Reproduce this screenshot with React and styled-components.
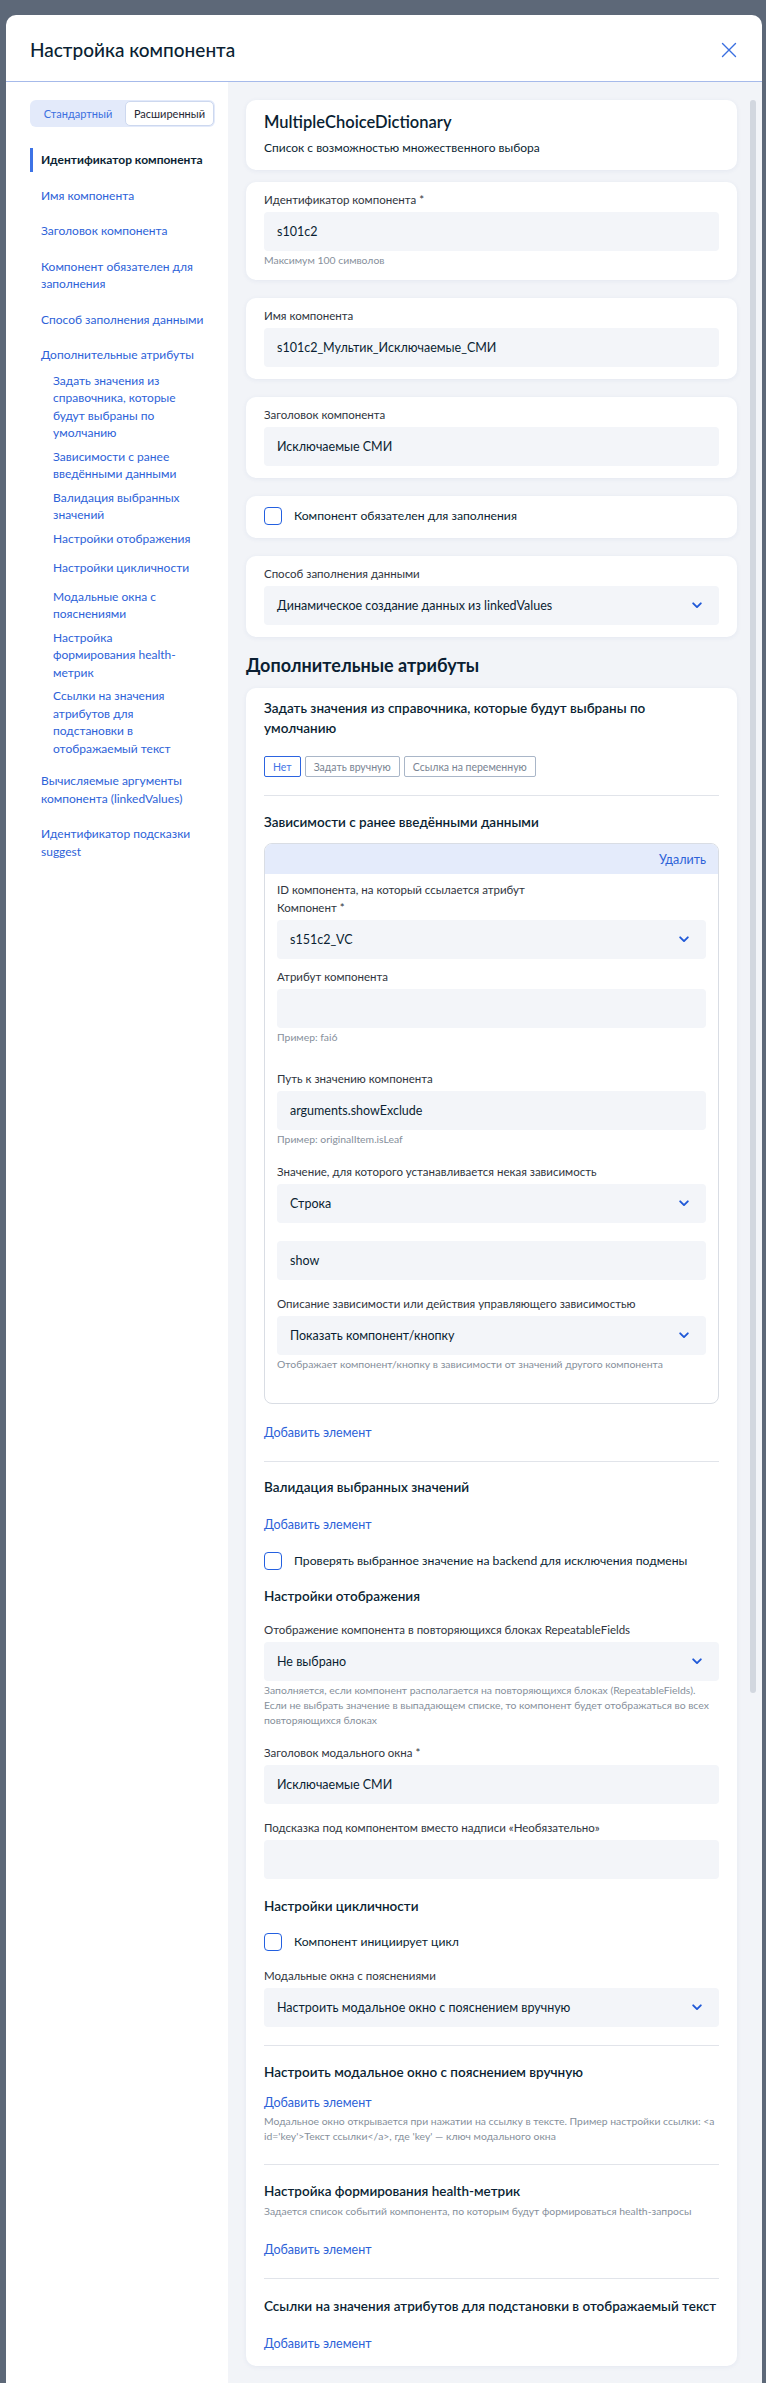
import React from 'react';
import styled, { createGlobalStyle } from 'styled-components';

const GlobalStyle = createGlobalStyle`
  html, body { margin: 0; padding: 0; }
  body {
    background: #5d6878;
    font-family: Lato, Roboto, "Liberation Sans", sans-serif;
    color: #0b1f33;
    overflow: hidden;
  }
  * { box-sizing: border-box; }
`;

const Page = styled.div`
  height: 2383px;
  padding: 15px 4px 0 6px;
`;

const Modal = styled.div`
  height: 2368px;
  background: #fff;
  border-radius: 10px 10px 0 0;
  display: flex;
  flex-direction: column;
  overflow: hidden;
`;

const Header = styled.header`
  height: 67px;
  flex-shrink: 0;
  display: flex;
  align-items: center;
  justify-content: space-between;
  padding: 3px 25px 0 24px;
  border-bottom: 1px solid #a6baea;
`;

const Title = styled.h1`
  margin: 0;
  font-size: 19px;
  line-height: 26px;
  font-weight: 500;
  color: #0b1f33;
`;

const CloseBtn = styled.button`
  border: 0;
  background: none;
  padding: 0;
  width: 16px;
  height: 16px;
  display: flex;
  cursor: pointer;
`;

const Body = styled.div`
  flex: 1;
  display: flex;
  min-height: 0;
`;

const Sidebar = styled.aside`
  width: 222px;
  flex-shrink: 0;
  background: #fff;
  padding: 18px 0 0 24px;
`;

const Tabs = styled.div`
  display: flex;
  width: 185px;
  height: 27px;
  padding: 1px;
  background: #e3eafa;
  border-radius: 6px;
`;

const Tab = styled.div`
  flex: 0 0 ${p => p.$w}px;
  display: flex;
  align-items: center;
  justify-content: center;
  font-size: 11px;
  border-radius: 5px;
  color: ${p => (p.$active ? '#1f2733' : '#3a6fe0')};
  background: ${p => (p.$active ? '#fff' : 'transparent')};
  border: 1px solid ${p => (p.$active ? '#cdd8ef' : 'transparent')};
`;

const Nav = styled.nav`
  margin-top: 21px;
  display: flex;
  flex-direction: column;
  gap: 12px;
  width: 181px;
`;

const NavItem = styled.a`
  display: block;
  padding: 3px 0 3px 8px;
  border-left: 3px solid ${p => (p.$active ? '#3d73e6' : 'transparent')};
  font-size: 12px;
  line-height: 17.5px;
  font-weight: ${p => (p.$active ? 700 : 400)};
  color: ${p => (p.$active ? '#0b1f33' : '#2d62d8')};
  text-decoration: none;
`;

const SubNav = styled.div`
  display: flex;
  flex-direction: column;
  padding-left: 23px;
  margin: -10px 0 -3px;
  width: 162px;
`;

const SubItem = styled.a`
  display: block;
  min-height: 29px;
  padding: 3px 0;
  font-size: 12px;
  line-height: 17.5px;
  color: #2d62d8;
  text-decoration: none;
`;

const Main = styled.main`
  flex: 1;
  display: flex;
  background: #f2f4f8;
  padding: 18px 6px 0 18px;
`;

const Content = styled.div`
  width: 491px;
  display: flex;
  flex-direction: column;
`;

const ScrollTrack = styled.div`
  width: 6px;
  margin-left: 13px;
`;

const ScrollThumb = styled.div`
  height: 1593px;
  border-radius: 3px;
  background: #d2d7df;
`;

const Card = styled.section`
  background: #fff;
  border-radius: 10px;
  padding: 10px 18px 12px;
  margin-top: ${p => p.$mt || 0}px;
  box-shadow: 0 1px 5px rgba(40, 70, 140, 0.07);
`;

const IntroTitle = styled.h2`
  margin: 0;
  font-size: 16.5px;
  line-height: 24px;
  font-weight: 600;
`;

const IntroText = styled.p`
  margin: 4px 0 0;
  font-size: 12px;
  line-height: 20px;
`;

const Label = styled.div`
  font-size: 11.5px;
  line-height: 16px;
  color: #2f3540;
  margin-bottom: ${p => (p.$mb !== undefined ? p.$mb : 4)}px;
`;

const Input = styled.div`
  height: 39px;
  border-radius: 4px;
  background: #f3f5f9;
  padding: 0 17px 0 13px;
  display: flex;
  align-items: center;
  justify-content: space-between;
  font-size: 12.5px;
  color: #0b1f33;
  margin-top: ${p => p.$mt || 0}px;
`;

const Hint = styled.div`
  margin-top: ${p => (p.$mt !== undefined ? p.$mt : 2)}px;
  font-size: 10.4px;
  line-height: 15px;
  color: #868f9b;
`;

const FieldWrap = styled.div`
  margin-top: ${p => p.$mt || 0}px;
`;

const CheckRow = styled.label`
  display: flex;
  align-items: center;
  gap: 12px;
  min-height: 20px;
  margin-top: ${p => p.$mt || 0}px;
`;

const Box = styled.span`
  width: 18px;
  height: 18px;
  flex-shrink: 0;
  border: 1.5px solid #2360e0;
  border-radius: 4px;
`;

const CheckText = styled.span`
  font-size: 12.2px;
  line-height: 20px;
  color: #0b1f33;
`;

const GroupTitle = styled.h2`
  margin: 16px 0 0;
  font-size: 18px;
  line-height: 24px;
  font-weight: 700;
`;

const H3 = styled.h3`
  margin: ${p => p.$mt || 0}px 0 0;
  font-size: 13.5px;
  line-height: 20px;
  font-weight: 600;
`;

const Toggles = styled.div`
  display: flex;
  gap: 4px;
  margin-top: 18px;
`;

const Toggle = styled.button`
  height: 21px;
  padding: 0 8px;
  background: #fff;
  border: 1px solid ${p => (p.$active ? '#2c64e0' : '#a9b6c8')};
  border-radius: 2px;
  font-family: inherit;
  font-size: 10.5px;
  color: ${p => (p.$active ? '#3f74e6' : '#7a8493')};
`;

const Divider = styled.hr`
  margin: ${p => p.$mt || 0}px 0 0;
  border: 0;
  height: 1px;
  background: #e1e4ea;
`;

const DepBlock = styled.div`
  margin-top: 11px;
  border: 1px solid #d9dde4;
  border-radius: 8px;
  overflow: hidden;
`;

const DepHead = styled.div`
  height: 30px;
  background: #e4ebfb;
  display: flex;
  align-items: center;
  justify-content: flex-end;
  padding: 0 12px;
  font-size: 12.5px;
  color: #2d62d8;
`;

const DepBody = styled.div`
  padding: 8px 12px 31px;
`;

const Link = styled.a`
  display: block;
  margin-top: ${p => p.$mt || 0}px;
  font-size: 12.5px;
  line-height: 20px;
  color: #2d62d8;
  text-decoration: none;
`;

const Chevron = () => (
  <svg width="10" height="7" viewBox="0 0 10 7" fill="none">
    <path d="M1.2 1.3L5 5.1l3.8-3.8" stroke="#2059d8" strokeWidth="1.9" strokeLinecap="round" strokeLinejoin="round" />
  </svg>
);

const CloseIcon = () => (
  <svg width="16" height="16" viewBox="0 0 16 16" fill="none">
    <path d="M1.5 1.5l13 13M14.5 1.5l-13 13" stroke="#3a6fe0" strokeWidth="1.4" strokeLinecap="round" />
  </svg>
);

function Field({ label, value, select, hint, mt }) {
  return (
    <FieldWrap $mt={mt}>
      {label && <Label>{label}</Label>}
      <Input>
        <span>{value}</span>
        {select && <Chevron />}
      </Input>
      {hint && <Hint>{hint}</Hint>}
    </FieldWrap>
  );
}

function Check({ children, mt }) {
  return (
    <CheckRow $mt={mt}>
      <Box />
      <CheckText>{children}</CheckText>
    </CheckRow>
  );
}

const subNav = [
  'Задать значения из справочника, которые будут выбраны по умолчанию',
  'Зависимости с ранее введёнными данными',
  'Валидация выбранных значений',
  'Настройки отображения',
  'Настройки цикличности',
  'Модальные окна с пояснениями',
  'Настройка формирования health-метрик',
  'Ссылки на значения атрибутов для подстановки в отображаемый текст',
];

export default function App() {
  return (
    <Page>
      <GlobalStyle />
      <Modal>
        <Header>
          <Title>Настройка компонента</Title>
          <CloseBtn aria-label="Закрыть">
            <CloseIcon />
          </CloseBtn>
        </Header>
        <Body>
          <Sidebar>
            <Tabs>
              <Tab $w={94}>Стандартный</Tab>
              <Tab $w={89} $active>Расширенный</Tab>
            </Tabs>
            <Nav>
              <NavItem $active>Идентификатор компонента</NavItem>
              <NavItem>Имя компонента</NavItem>
              <NavItem>Заголовок компонента</NavItem>
              <NavItem>Компонент обязателен для заполнения</NavItem>
              <NavItem>Способ заполнения данными</NavItem>
              <NavItem>Дополнительные атрибуты</NavItem>
              <SubNav>
                {subNav.map(s => (
                  <SubItem key={s}>{s}</SubItem>
                ))}
              </SubNav>
              <NavItem>Вычисляемые аргументы компонента (linkedValues)</NavItem>
              <NavItem>Идентификатор подсказки suggest</NavItem>
            </Nav>
          </Sidebar>

          <Main>
            <Content>
              <Card>
                <IntroTitle>MultipleChoiceDictionary</IntroTitle>
                <IntroText>Список с возможностью множественного выбора</IntroText>
              </Card>
              <Card $mt={12}>
                <Field label="Идентификатор компонента *" value="s101c2" hint="Максимум 100 символов" />
              </Card>
              <Card $mt={18}>
                <Field label="Имя компонента" value="s101c2_Мультик_Исключаемые_СМИ" />
              </Card>
              <Card $mt={18}>
                <Field label="Заголовок компонента" value="Исключаемые СМИ" />
              </Card>
              <Card $mt={18}>
                <Check>Компонент обязателен для заполнения</Check>
              </Card>
              <Card $mt={18}>
                <Field label="Способ заполнения данными" value="Динамическое создание данных из linkedValues" select />
              </Card>

              <GroupTitle>Дополнительные атрибуты</GroupTitle>

              <Card $mt={11}>
                <H3>Задать значения из справочника, которые будут выбраны по умолчанию</H3>
                <Toggles>
                  <Toggle $active>Нет</Toggle>
                  <Toggle>Задать вручную</Toggle>
                  <Toggle>Ссылка на переменную</Toggle>
                </Toggles>
                <Divider $mt={18} />

                <H3 $mt={16}>Зависимости с ранее введёнными данными</H3>
                <DepBlock>
                  <DepHead>Удалить</DepHead>
                  <DepBody>
                    <Label $mb={2}>ID компонента, на который ссылается атрибут</Label>
                    <Field label="Компонент *" value="s151c2_VC" select />
                    <Field mt={10} label="Атрибут компонента" value="" hint="Пример: fai6" />
                    <Field mt={26} label="Путь к значению компонента" value="arguments.showExclude" hint="Пример: originalItem.isLeaf" />
                    <Field mt={17} label="Значение, для которого устанавливается некая зависимость" value="Строка" select />
                    <Input $mt={18}>show</Input>
                    <Field
                      mt={16}
                      label="Описание зависимости или действия управляющего зависимостью"
                      value="Показать компонент/кнопку"
                      select
                      hint="Отображает компонент/кнопку в зависимости от значений другого компонента"
                    />
                  </DepBody>
                </DepBlock>
                <Link $mt={19}>Добавить элемент</Link>
                <Divider $mt={18} />

                <H3 $mt={15}>Валидация выбранных значений</H3>
                <Link $mt={18}>Добавить элемент</Link>
                <Check mt={16}>Проверять выбранное значение на backend для исключения подмены</Check>

                <H3 $mt={15}>Настройки отображения</H3>
                <Field
                  mt={16}
                  label="Отображение компонента в повторяющихся блоках RepeatableFields"
                  value="Не выбрано"
                  select
                  hint="Заполняется, если компонент располагается на повторяющихся блоках (RepeatableFields). Если не выбрать значение в выпадающем списке, то компонент будет отображаться во всех повторяющихся блоках"
                />
                <Field mt={17} label="Заголовок модального окна *" value="Исключаемые СМИ" />
                <Field mt={16} label="Подсказка под компонентом вместо надписи «Необязательно»" value="" />

                <H3 $mt={17}>Настройки цикличности</H3>
                <Check mt={16}>Компонент инициирует цикл</Check>
                <Field mt={16} label="Модальные окна с пояснениями" value="Настроить модальное окно с пояснением вручную" select />
                <Divider $mt={18} />

                <H3 $mt={16}>Настроить модальное окно с пояснением вручную</H3>
                <Link $mt={11}>Добавить элемент</Link>
                <Hint $mt={1}>
                  Модальное окно открывается при нажатии на ссылку в тексте. Пример настройки ссылки: &lt;a id='key'&gt;Текст ссылки&lt;/a&gt;, где 'key' — ключ модального окна
                </Hint>
                <Divider $mt={20} />

                <H3 $mt={16}>Настройка формирования health-метрик</H3>
                <Hint $mt={3}>Задается список событий компонента, по которым будут формироваться health-запросы</Hint>
                <Link $mt={21}>Добавить элемент</Link>
                <Divider $mt={18} />

                <H3 $mt={17}>Ссылки на значения атрибутов для подстановки в отображаемый текст</H3>
                <Link $mt={18}>Добавить элемент</Link>
              </Card>
            </Content>
            <ScrollTrack>
              <ScrollThumb />
            </ScrollTrack>
          </Main>
        </Body>
      </Modal>
    </Page>
  );
}
